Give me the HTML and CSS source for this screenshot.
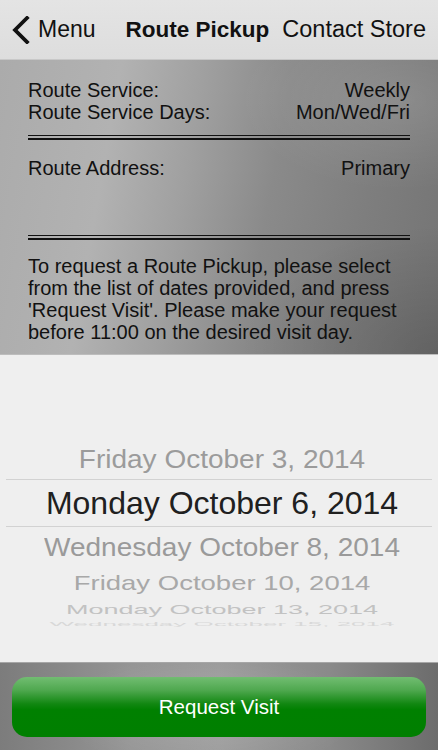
FILE: index.html
```html
<!DOCTYPE html>
<html>
<head>
<meta charset="utf-8">
<link rel="stylesheet" href="styles.css">
</head>
<body>
<div class="screen">
  <header class="nav">
    <div class="back">
      <svg class="chev" width="18" height="28" viewBox="0 0 18 28"><path d="M15 2 L3 14 L15 26" fill="none" stroke="#111" stroke-width="3.8" stroke-linecap="square" stroke-linejoin="miter"/></svg>
      <span class="back-label">Menu</span>
    </div>
    <div class="title">Route Pickup</div>
    <div class="action">Contact Store</div>
  </header>
  <section class="info">
    <div class="rows">
      <div class="row"><span>Route Service:</span><span>Weekly</span></div>
      <div class="row"><span>Route Service Days:</span><span>Mon/Wed/Fri</span></div>
    </div>
    <div class="dbl dbl-1"></div>
    <div class="row addr"><span>Route Address:</span><span>Primary</span></div>
    <div class="dbl dbl-2"></div>
    <p class="note">To request a Route Pickup, please select from the list of dates provided, and press 'Request Visit'. Please make your request before 11:00 on the desired visit day.</p>
  </section>
  <section class="picker">
    <div class="item i-prev"><span>Friday October 3, 2014</span></div>
    <div class="item i-sel"><span>Monday October 6, 2014</span></div>
    <div class="item i-n1"><span>Wednesday October 8, 2014</span></div>
    <div class="item i-n2"><span>Friday October 10, 2014</span></div>
    <div class="item i-n3"><span>Monday October 13, 2014</span></div>
    <div class="item i-n4"><span>Wednesday October 15, 2014</span></div>
  </section>
  <footer class="footer">
    <button class="btn">Request Visit</button>
  </footer>
</div>
</body>
</html>
```

FILE: styles.css
```css
* { box-sizing: border-box; }
html, body { margin: 0; padding: 0; }
body {
  width: 438px;
  height: 750px;
  overflow: hidden;
  font-family: "Liberation Sans", Arial, Helvetica, sans-serif;
  background: #efefef;
}
.screen { width: 438px; height: 750px; display: flex; flex-direction: column; }

.nav {
  height: 60px;
  flex: none;
  display: flex;
  align-items: center;
  padding: 0 12px 0 12px;
  background: linear-gradient(to bottom, #e4e4e4, #dddddd);
  border-bottom: 1px solid #c8c8c8;
  font-size: 23px;
  color: #111;
}
.back { display: flex; align-items: center; }
.chev { display: block; margin-right: 8px; margin-top: 1px; }
.title { font-weight: bold; font-size: 22.5px; margin-left: 30px; }
.action { margin-left: auto; font-size: 23.5px; }

.info {
  height: 295px;
  flex: none;
  padding: 19px 28px 0 28px;
  color: #111;
  font-size: 20px;
  line-height: 22px;
  background:
    radial-gradient(ellipse 160px 90px at 400px 40px, rgba(255,255,255,0.12), rgba(255,255,255,0) 100%),
    radial-gradient(ellipse 200px 130px at 440px 295px, rgba(0,0,0,0.16), rgba(0,0,0,0) 100%),
    linear-gradient(100deg, #ababab 0%, #b2b2b2 25%, #a0a0a0 42%, #8a8a8a 60%, #7e7e7e 80%, #747474 100%);
  border-bottom: 1px solid #bdbdbd;
}
.row { display: flex; justify-content: space-between; height: 22px; }
.dbl {
  height: 5px;
  border-top: 1px solid #111;
  border-bottom: 2px solid #111;
}
.dbl-1 { margin-top: 12px; }
.addr { margin-top: 17px; }
.dbl-2 { margin-top: 56px; }
.note { margin: 15px 0 0 0; }

.picker {
  height: 307px;
  flex: none;
  background: #efefef;
  padding-top: 86px;
  overflow: hidden;
  display: flex;
  flex-direction: column;
}
.item {
  flex: none;
  display: flex;
  align-items: center;
  justify-content: center;
  white-space: nowrap;
}
.item span { display: block; line-height: 1; }
.i-prev { height: 38px; font-size: 28px; color: #9b9b9b; padding-left: 6px; }
.i-prev span { transform: scaleY(0.9); }
.i-sel {
  height: 48px;
  margin: 0 6px;
  border-top: 1px solid #d2d2d2;
  border-bottom: 1px solid #d2d2d2;
  font-size: 32px;
  color: #202020;
  padding-left: 6px;
}
.i-n1 { height: 42px; font-size: 28px; color: #9a9a9a; padding-left: 6px; }
.i-n1 span { transform: scaleY(0.9); }
.i-n2 { height: 28px; font-size: 27.5px; color: #a8a8a8; padding-left: 6px; }
.i-n2 span { transform: scaleY(0.73); }
.i-n3 { height: 24px; font-size: 27px; color: #c2c2c2; padding-left: 6px; }
.i-n3 span { transform: scaleY(0.5); }
.i-n4 { height: 8px; font-size: 26px; color: #d8d8d8; align-items: flex-start; padding-left: 6px; }
.i-n4 span { transform: scaleY(0.24); transform-origin: center top; }

.footer {
  height: 88px;
  flex: none;
  padding: 14px 12px 0 12px;
  background:
    radial-gradient(ellipse 150px 60px at 210px 50px, rgba(255,255,255,0.14), rgba(255,255,255,0) 100%),
    linear-gradient(90deg, #7c7c7c 0%, #959595 30%, #9a9a9a 50%, #8a8a8a 75%, #6c6c6c 100%);
  border-top: 1px solid #a6a6a6;
}
.btn {
  display: block;
  width: 414px;
  height: 60px;
  border: none;
  border-radius: 15px;
  padding: 0;
  font-family: "Liberation Sans", Arial, Helvetica, sans-serif;
  font-size: 20.5px;
  color: #ffffff;
  background: linear-gradient(to bottom, #72bd72 0%, #4fa84f 22%, #118711 45%, #008000 55%, #007f00 100%);
}
```
